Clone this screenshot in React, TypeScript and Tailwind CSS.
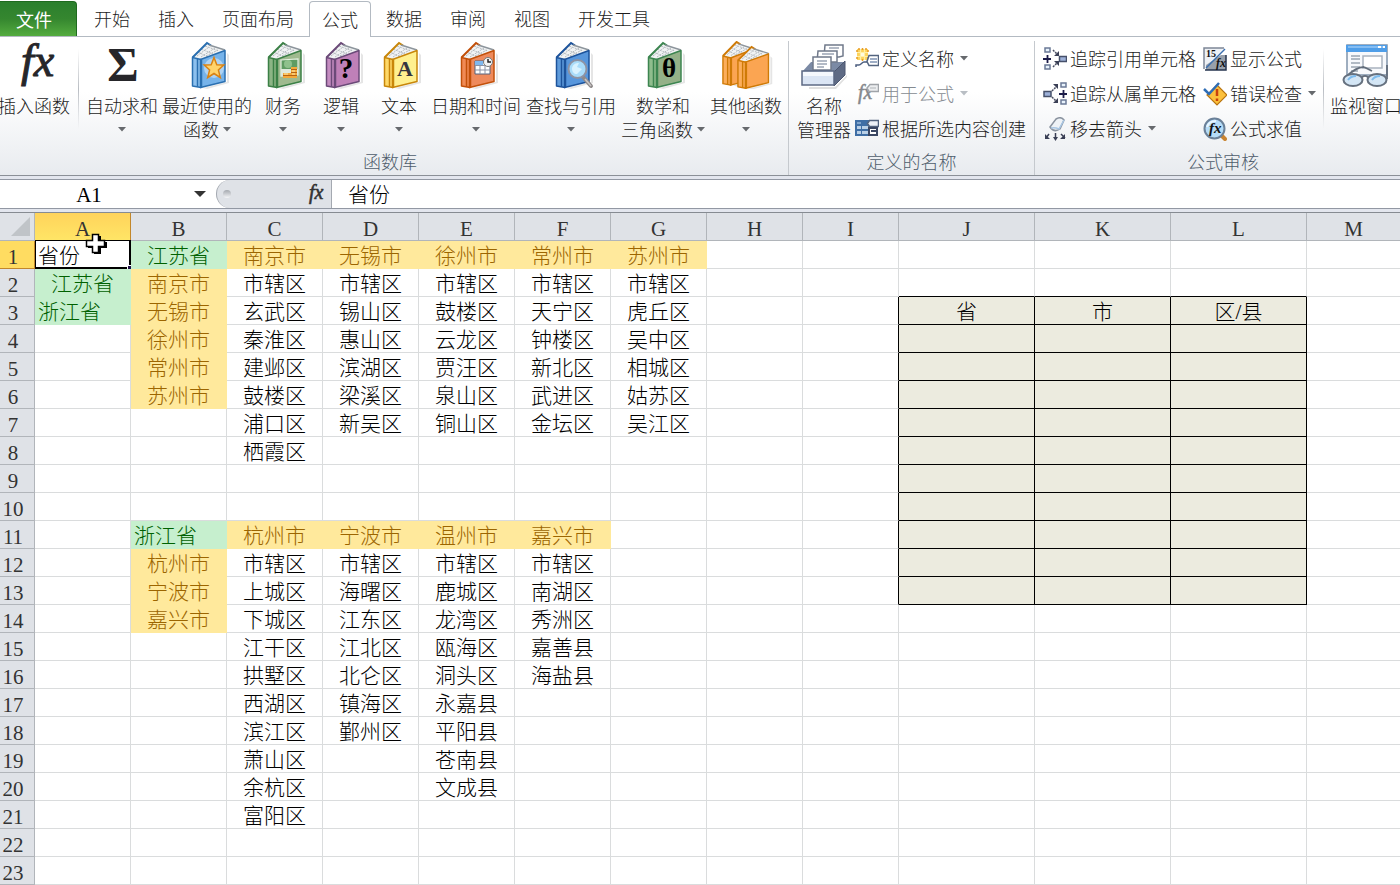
import React, { useState } from 'react';
import clsx from 'clsx';

const COLUMNS = ['A', 'B', 'C', 'D', 'E', 'F', 'G', 'H', 'I', 'J', 'K', 'L', 'M'];

const TABS = ['开始', '插入', '页面布局', '公式', '数据', '审阅', '视图', '开发工具'];

const ROWS: string[][] = [
  ['省份', '江苏省', '南京市', '无锡市', '徐州市', '常州市', '苏州市'],
  ['江苏省', '南京市', '市辖区', '市辖区', '市辖区', '市辖区', '市辖区'],
  ['浙江省', '无锡市', '玄武区', '锡山区', '鼓楼区', '天宁区', '虎丘区', '', '', '省', '市', '区/县'],
  ['', '徐州市', '秦淮区', '惠山区', '云龙区', '钟楼区', '吴中区'],
  ['', '常州市', '建邺区', '滨湖区', '贾汪区', '新北区', '相城区'],
  ['', '苏州市', '鼓楼区', '梁溪区', '泉山区', '武进区', '姑苏区'],
  ['', '', '浦口区', '新吴区', '铜山区', '金坛区', '吴江区'],
  ['', '', '栖霞区'],
  [],
  [],
  ['', '浙江省', '杭州市', '宁波市', '温州市', '嘉兴市'],
  ['', '杭州市', '市辖区', '市辖区', '市辖区', '市辖区'],
  ['', '宁波市', '上城区', '海曙区', '鹿城区', '南湖区'],
  ['', '嘉兴市', '下城区', '江东区', '龙湾区', '秀洲区'],
  ['', '', '江干区', '江北区', '瓯海区', '嘉善县'],
  ['', '', '拱墅区', '北仑区', '洞头区', '海盐县'],
  ['', '', '西湖区', '镇海区', '永嘉县'],
  ['', '', '滨江区', '鄞州区', '平阳县'],
  ['', '', '萧山区', '', '苍南县'],
  ['', '', '余杭区', '', '文成县'],
  ['', '', '富阳区'],
  [],
  [],
];

const LEFT_ALIGNED = ['A1', 'A3', 'B11'];

function cellClass(row: number, col: number) {
  const text = ROWS[row - 1][col] ?? '';
  const inForm = (r: number, c: number) => r >= 3 && r <= 13 && c >= 9 && c <= 11;

  if (text.endsWith('省') && col < 2) return 'bg-[#c6efce] border-[#c6efce] text-[#006100]';
  if (text.endsWith('市') && col < 9) return 'bg-[#ffe99c] border-[#ffe99c] text-[#9c6500]';
  if (inForm(row, col)) return 'bg-[#ecebdf] border-black text-black';
  return clsx(
    'bg-white text-black',
    inForm(row, col + 1) ? 'border-r-black' : 'border-r-[#dadcdd]',
    inForm(row + 1, col) ? 'border-b-black' : 'border-b-[#dadcdd]',
  );
}

/* ---------- icons ---------- */

function Caret({ muted = false }: { muted?: boolean }) {
  return (
    <svg width="8" height="5" viewBox="0 0 8 5" className={clsx('shrink-0', muted ? 'text-[#b9bec4]' : 'text-[#66696d]')}>
      <path d="M0 0h8L4 4.500z" fill="currentColor" />
    </svg>
  );
}

interface BookProps {
  edge: string;
  light: string;
  fill: string;
  children?: React.ReactNode;
}

function BookShape({ edge, light, fill }: BookProps) {
  return (
    <>
      <path d="M20 47 44 41V12l2 2v28L24 48z" fill="#000" opacity=".1" />
      <path d="M10 16 24 2 42 9 18 18z" fill="#f1f3f4" />
      <path d="M14 15l12-9M18 16l14-9M23 15l12-6M18 8l12 5M15 11l10 5M22 5l14 5" stroke="#b4babf" strokeWidth="1" strokeDasharray="2 1" />
      <path d="M9.500 16.500 24 2l4 2.500" fill="none" stroke={edge} strokeWidth="2" />
      <path d="M26 4 42 9" fill="none" stroke="#8d959c" strokeWidth="1.500" />
      <path d="M9.500 16.500 18 18.500V46.500L9.500 45z" fill={light} stroke={edge} strokeWidth="1.500" strokeLinejoin="round" />
      <path d="M17.500 18.500 42 9.500V40.500L17.500 46.500z" fill={fill} stroke={edge} strokeWidth="1.500" strokeLinejoin="round" />
      <path d="M14.500 18v28M18.500 18.500v28" stroke={edge} strokeWidth="1.500" />
    </>
  );
}

function Book(props: BookProps) {
  return (
    <svg width="48" height="48" viewBox="0 0 48 48">
      <BookShape {...props} />
      {props.children}
    </svg>
  );
}

const glyph = "font-['Liberation_Serif',serif] font-bold";
const thinGlyph = "overflow-visible font-['Liberation_Serif',serif] font-normal";

const RecentIcon = () => (
  <Book edge="#2a6fb0" light="#8dc0ee" fill="#76b3ea">
    <circle cx="31" cy="27" r="10" fill="#c8e1f7" opacity=".7" />
    <path d="M31 16.500l2.800 7.200 7 .3-5.400 5 1.900 7.500-6.300-4-6.300 4 1.900-7.500-5.400-5 7-.3z" fill="#ffd36b" stroke="#d98214" strokeWidth="1.500" />
  </Book>
);

const FinanceIcon = () => (
  <Book edge="#3b8046" light="#8cb585" fill="#9fba8f">
    <path d="M22 19 39 18V34L22 35z" fill="#5f9c63" stroke="#e3efe0" strokeWidth="1.200" />
    <path d="M22 28h17v6l-17 1z" fill="#dfe9dc" />
    <circle cx="29" cy="23" r="4" fill="#8fc18d" />
    <path d="M32 26h6v11h-6zM24 32h8v5h-8z" fill="#f2a93b" />
    <path d="M32 28.500h6M32 31.500h6M24 34.500h8M32 34.500h6" stroke="#b8620f" strokeWidth="1" />
    <path d="M33 30h3M33 33h3M25 33h4" stroke="#ffe9a8" strokeWidth="1" />
  </Book>
);

const LogicIcon = () => (
  <Book edge="#6b4a78" light="#c48cc0" fill="#bf80b8">
    <text x="29" y="37" textAnchor="middle" fontSize="29" className={glyph}>?</text>
  </Book>
);

const TextIcon = () => (
  <Book edge="#c8860a" light="#ffd968" fill="#fff08f">
    <text x="30" y="35" textAnchor="middle" fontSize="22" fill="#35353f" className={glyph}>A</text>
  </Book>
);

const DateIcon = () => (
  <Book edge="#c2500a" light="#f08a55" fill="#ee8a5c">
    <path d="M23 20h15v13H23z" fill="#fff" stroke="#55607a" strokeWidth="1" />
    <path d="M23 20h8v4h-8z" fill="#7fb8ef" />
    <path d="M23 24.500h15M23 29h15M28 24v9M33 24v9" stroke="#8b93a5" strokeWidth="1" />
    <circle cx="36" cy="21" r="4.500" fill="#f3f3f3" stroke="#777" strokeWidth="1" />
    <path d="M36 18v3h3" stroke="#222" strokeWidth="1.500" fill="none" />
  </Book>
);

const LookupIcon = () => (
  <Book edge="#1d539b" light="#5f9bdb" fill="#5796dc">
    <path d="M36 36l8 9" stroke="#8f8a8a" strokeWidth="4" strokeLinecap="round" />
    <path d="M38 38l6 7" stroke="#c9c6c6" strokeWidth="1.500" />
    <circle cx="30.500" cy="28" r="9" fill="#a9dcfa" stroke="#8e93a3" strokeWidth="2" />
    <path d="M25 27c1-4 4-5 7-5l-2 4 5 2-5 5c-3 0-5-2-5-6z" fill="#d9f2ff" />
  </Book>
);

const MathIcon = () => (
  <Book edge="#3c8550" light="#8fbd8d" fill="#94b188">
    <text x="30" y="36" textAnchor="middle" fontSize="27" className={glyph}>θ</text>
  </Book>
);

function MoreIcon() {
  const colors = { edge: '#cf7a06', light: '#fcae5c', fill: '#fba552' };
  return (
    <svg width="56" height="48" viewBox="0 0 56 48">
      <g transform="translate(-4 -1) scale(.94 .97)">
        <BookShape {...colors} />
      </g>
      <g transform="translate(11 4) scale(.94 .93)">
        <BookShape {...colors} />
      </g>
    </svg>
  );
}

const FxIcon = () => (
  <svg width="48" height="48" viewBox="0 0 48 48" fill="#26262a" stroke="#26262a" className={thinGlyph}>
    <text x="11" y="35" fontSize="46" fontStyle="italic">fx</text>
  </svg>
);

const SumIcon = () => (
  <svg width="48" height="48" viewBox="0 0 48 48" className="overflow-visible">
    <text x="25" y="40" textAnchor="middle" fontSize="48" fill="#26262a" className={glyph}>Σ</text>
  </svg>
);

const NameManagerIcon = () => (
  <svg width="48" height="48" viewBox="0 0 48 48">
    <path d="M9 46 35 46 47 34 47 36 36 48 9 48z" fill="#000" opacity=".12" />
    <path d="M2 31 11 21H45L34 31z" fill="#7b8aa5" />
    <path d="M25 4h18v11l-4 1H24z" fill="#fff" stroke="#70798a" strokeWidth="1.500" />
    <path d="M18 10h19v11H17z" fill="#fff" stroke="#70798a" strokeWidth="1.500" />
    <path d="M13 16h18v13H13z" fill="#fff" stroke="#70798a" strokeWidth="1.500" />
    <path d="M17 20h10M17 23h10M17 26h7M22 13h12M29 7h10" stroke="#9aa4b4" strokeWidth="1.500" />
    <path d="M34 31 45 20V34L34 45z" fill="#5e6a84" stroke="#4c5770" strokeWidth="1" />
    <path d="M2 30h32v14H2z" fill="#dbe5f4" stroke="#5e6a84" strokeWidth="1.500" />
    <path d="M3 31h30v4H3z" fill="#f5f8fd" />
  </svg>
);

const WatchIcon = () => (
  <svg width="48" height="48" viewBox="0 0 48 48">
    <path d="M5 4h40v30H5z" fill="#f7f9fc" stroke="#8094ab" strokeWidth="1.500" />
    <path d="M4 4h41v7H4z" fill="#4f9ee8" />
    <path d="M6 5h37v2H6z" fill="#84bdf3" />
    <path d="M36 6h3M41 6h2" stroke="#fff" strokeWidth="2" />
    <path d="M9 15h9M9 18h9M9 22h9M9 26h9M9 30h7" stroke="#9aa5b1" strokeWidth="1.500" />
    <path d="M21 15h19v12H21z" fill="#fff" stroke="#a9b3bf" strokeWidth="1.500" />
    <path d="M4 36C11 29 17 26 22 26M45 24v14M27 37c-3-3-5-3-8 0M22 26l8 4" fill="none" stroke="#626d7b" strokeWidth="1.800" />
    <ellipse cx="11" cy="39" rx="9.500" ry="6" fill="#d4e6f5" stroke="#66717f" strokeWidth="2" />
    <ellipse cx="35" cy="39" rx="9.500" ry="6" fill="#d4e6f5" stroke="#66717f" strokeWidth="2" />
    <path d="M6 39c2-3 5-4 8-4M30 39c2-3 5-4 8-4" fill="none" stroke="#7dbbed" strokeWidth="2" />
  </svg>
);

function SmallSvg({ children }: { children: React.ReactNode }) {
  return (
    <svg width="24" height="24" viewBox="0 0 24 24" fill="none" className="shrink-0">
      {children}
    </svg>
  );
}

const DefineNameIcon = () => (
  <SmallSvg>
    <path d="M2 2h11v11H2z" fill="#fdd35c" />
    <path d="M2 5.500h11M2 9.500h11M5.500 2v11M9.500 2v11" stroke="#fff0a8" strokeWidth="1.200" />
    <path d="M1 4h2M12 4h2M1 11h2M12 11h2M4 1v2M11 1v2M7.500 1v2M7.500 12v2" stroke="#e79c24" strokeWidth="1.500" />
    <path d="M6 6h3v3H6z" fill="#fffbe0" />
    <path d="M1 20v-2h3c2 0 3-3 5-3h4" stroke="#4d5f80" strokeWidth="1.500" />
    <path d="M14 8.500h9.500v10H14l-2-4z" fill="#fff" stroke="#53647f" strokeWidth="1.500" />
    <path d="M15 12h7M15 15h7" stroke="#7f93b2" strokeWidth="1.500" />
  </SmallSvg>
);

const UseFormulaIcon = () => (
  <SmallSvg>
    <text x="3" y="17" fontSize="20" fontStyle="italic" fill="#85888c" stroke="#85888c" strokeWidth=".5" className={thinGlyph}>fx</text>
    <path d="M15 2.500h8.500v7H14l-2-3.500z" fill="#eceef0" stroke="#a0a4a9" strokeWidth="1.500" />
    <path d="M15 6h6" stroke="#b0b4b8" />
  </SmallSvg>
);

const CreateFromIcon = () => (
  <SmallSvg>
    <path d="M0 3h14v16H0z" fill="#3f6ea5" />
    <path d="M2 9h4v3H2zM7 9h6v3H7zM2 14h4v3H2zM7 14h6v3H7z" fill="#b9cfe6" />
    <path d="M2 5h4v2H2z" fill="#7fa4cc" />
    <path d="M14.500 3.500h9v6h-9l-2-3z" fill="#eef2f8" stroke="#53647f" strokeWidth="1.500" />
    <path d="M14 11h8v7h-8z" fill="#fff" stroke="#3b4763" strokeWidth="2" />
    <path d="M16 14h5" stroke="#3b4763" strokeWidth="2" />
  </SmallSvg>
);

const Node = ({ x, y }: { x: number; y: number }) => (
  <path d={`M${x} ${y}h5v4h-5z`} fill="#e8f3fc" stroke="#6b7a96" strokeWidth="1.500" />
);

const PrecedentsIcon = () => (
  <SmallSvg>
    <Node x={2} y={1} />
    <Node x={2} y={18} />
    <path d="M0 12h8M4.500 8v8" stroke="#1b1b48" strokeWidth="1.800" />
    <path d="M10 3l5 5M10 20l5-5" stroke="#4a4f63" strokeWidth="1.500" strokeDasharray="2 1" />
    <path d="M16 4v5h-5zM16 19v-5h-5z" fill="#3a3f55" />
    <path d="M16.500 9.500h7v5h-7z" fill="#9db0d8" stroke="#46506a" strokeWidth="1.500" />
  </SmallSvg>
);

const DependentsIcon = () => (
  <SmallSvg>
    <path d="M1 9.500h7v5H1z" fill="#9db0d8" stroke="#46506a" strokeWidth="1.500" />
    <path d="M9 9l5-5M9 15l5 5" stroke="#4a4f63" strokeWidth="1.500" strokeDasharray="2 1" />
    <path d="M10 2h5v5zM15 16v5h-5z" fill="#3a3f55" />
    <Node x={18} y={1} />
    <Node x={18} y={18} />
    <path d="M16 12h8M20.500 8v8" stroke="#1b1b48" strokeWidth="1.800" />
  </SmallSvg>
);

const RemoveArrowsIcon = () => (
  <SmallSvg>
    <path d="M7 10 13 2q5-3 8 1l-4 9q-6 4-10-2z" fill="#eef2f6" stroke="#8a939f" strokeWidth="1.500" />
    <path d="M8 11q4-1 8 1l5-9" stroke="#a9c7e4" strokeWidth="1.500" />
    <path d="M6 17l-3 4M12.500 16v6M18 17l4 4" stroke="#3a3f55" strokeWidth="1.500" />
    <path d="M2 17v5h5zM10 20h5l-2.500 4zM17 22h5v-5z" fill="#3a3f55" />
  </SmallSvg>
);

const ShowFormulasIcon = () => (
  <SmallSvg>
    <path d="M1 1h20L1 22z" fill="#eef1f5" />
    <path d="M23 8v15H3V18L18 8z" fill="#98a0ab" />
    <path d="M1 22V1h20" stroke="#7d8796" strokeWidth="1.500" />
    <path d="M23 8v15H2" stroke="#26344f" strokeWidth="1.500" />
    <path d="M22 2 3 21" stroke="#3b6fae" strokeWidth="1.500" />
    <text x="3" y="10" fontSize="10" fill="#111" className={glyph}>15</text>
    <text x="13" y="20" fontSize="12" fontStyle="italic" fill="#111" className={glyph}>fx</text>
  </SmallSvg>
);

const ErrorCheckIcon = () => (
  <SmallSvg>
    <path d="M14 3 24 13 14 23 4 13z" fill="#fcc03c" stroke="#b87411" strokeWidth="1.200" />
    <path d="M14 7v7M14 16.500v2.500" stroke="#c8420c" strokeWidth="2.500" />
    <path d="M1 7l5 5L16 1" stroke="#2f6db5" strokeWidth="2.500" />
  </SmallSvg>
);

const EvaluateIcon = () => (
  <SmallSvg>
    <path d="M18 18l4 4" stroke="#c98432" strokeWidth="4" strokeLinecap="round" />
    <circle cx="11.500" cy="11.500" r="10" fill="#b5dcf8" stroke="#6b8199" strokeWidth="2" />
    <path d="M4 10q2-6 9-6" stroke="#e9f6ff" strokeWidth="2" />
    <text x="6" y="16" fontSize="15" fontStyle="italic" fill="#111" className={glyph}>fx</text>
  </SmallSvg>
);

/* ---------- ribbon ---------- */

interface BigButtonProps {
  icon: React.ReactNode;
  lines: string[];
  menu?: boolean;
  className: string;
}

function BigButton({ icon, lines, menu = false, className }: BigButtonProps) {
  const last = lines.length - 1;
  return (
    <button type="button" className={clsx('flex shrink-0 flex-col items-center whitespace-nowrap', className)}>
      <span className="mb-1 flex h-12 justify-center">{icon}</span>
      {lines.map((line, i) => (
        <span key={line} className="flex h-6 items-center gap-1 leading-6">
          {line}
          {menu && i === last && last > 0 && <Caret />}
        </span>
      ))}
      {menu && last === 0 && (
        <span className="flex h-6 items-center">
          <Caret />
        </span>
      )}
    </button>
  );
}

interface SmallButtonProps {
  icon: React.ReactNode;
  label: string;
  menu?: boolean;
  disabled?: boolean;
}

function SmallButton({ icon, label, menu = false, disabled = false }: SmallButtonProps) {
  return (
    <button
      type="button"
      disabled={disabled}
      className={clsx('flex h-[35px] items-center whitespace-nowrap', disabled && 'text-[#858b91]')}
    >
      {icon}
      <span className="ml-[3px]">{label}</span>
      {menu && (
        <span className="ml-1.5 flex items-center">
          <Caret muted={disabled} />
        </span>
      )}
    </button>
  );
}

function Group({ label, className, children }: { label: string; className: string; children: React.ReactNode }) {
  return (
    <section aria-label={label} className={clsx('flex flex-col', className)}>
      <div className="flex h-[108px] items-start">{children}</div>
      <div className="h-6 text-center leading-6 text-[#4f5d6c]">{label}</div>
    </section>
  );
}

const Divider = ({ className }: { className: string }) => (
  <div className={clsx('h-20 w-px shrink-0 bg-linear-to-b from-transparent via-[#b9bdc3] to-transparent', className)} />
);

function Ribbon() {
  return (
    <div className="flex h-[139px] overflow-hidden border-b border-[#8b9097] bg-linear-to-b from-white from-40% to-[#e8ebef] pt-1 text-[18px] text-[#1c1c1c]">
      <Group label="函数库" className="-ml-2 w-[797px] shrink-0 border-r border-[#c5c9ce]">
        <BigButton icon={<FxIcon />} lines={['插入函数']} className="ml-1 w-[76px]" />
        <Divider className="ml-1.5 mt-2 mr-[5px]" />
        <BigButton icon={<SumIcon />} lines={['自动求和']} menu className="w-[76px]" />
        <BigButton icon={<RecentIcon />} lines={['最近使用的', '函数']} menu className="w-[94px]" />
        <BigButton icon={<FinanceIcon />} lines={['财务']} menu className="w-[58px]" />
        <BigButton icon={<LogicIcon />} lines={['逻辑']} menu className="w-[58px]" />
        <BigButton icon={<TextIcon />} lines={['文本']} menu className="w-[58px]" />
        <BigButton icon={<DateIcon />} lines={['日期和时间']} menu className="w-24" />
        <BigButton icon={<LookupIcon />} lines={['查找与引用']} menu className="w-[94px]" />
        <BigButton icon={<MathIcon />} lines={['数学和', '三角函数']} menu className="w-[90px]" />
        <BigButton icon={<MoreIcon />} lines={['其他函数']} menu className="w-[76px]" />
      </Group>

      <Group label="定义的名称" className="w-[246px] shrink-0 border-r border-[#c5c9ce]">
        <BigButton icon={<NameManagerIcon />} lines={['名称', '管理器']} className="ml-1 w-[62px]" />
        <div className="flex flex-col items-start">
          <SmallButton icon={<DefineNameIcon />} label="定义名称" menu />
          <SmallButton icon={<UseFormulaIcon />} label="用于公式" menu disabled />
          <SmallButton icon={<CreateFromIcon />} label="根据所选内容创建" />
        </div>
      </Group>

      <Group label="公式审核" className="min-w-[376px] flex-1">
        <div className="ml-2 flex w-40 shrink-0 flex-col items-start">
          <SmallButton icon={<PrecedentsIcon />} label="追踪引用单元格" />
          <SmallButton icon={<DependentsIcon />} label="追踪从属单元格" />
          <SmallButton icon={<RemoveArrowsIcon />} label="移去箭头" menu />
        </div>
        <div className="flex w-[120px] shrink-0 flex-col items-start">
          <SmallButton icon={<ShowFormulasIcon />} label="显示公式" />
          <SmallButton icon={<ErrorCheckIcon />} label="错误检查" menu />
          <SmallButton icon={<EvaluateIcon />} label="公式求值" />
        </div>
        <Divider className="mt-2 mr-1" />
        <BigButton icon={<WatchIcon />} lines={['监视窗口']} className="w-[76px]" />
      </Group>
    </div>
  );
}

/* ---------- formula bar ---------- */

function FormulaBar() {
  const [name, setName] = useState('A1');
  const [value, setValue] = useState('省份');

  return (
    <div className="my-[3px] flex h-[30px] items-stretch border-y border-[#9298a3] bg-white font-['Liberation_Serif','Noto_Sans_CJK_SC',serif] text-[21px] font-light text-black">
      <input
        aria-label="名称框"
        className="w-[178px] shrink-0 pt-1 text-center focus:outline-none"
        value={name}
        onChange={(e) => setName(e.target.value)}
      />
      <button type="button" aria-label="名称列表" className="flex w-[38px] shrink-0 items-center justify-center pl-1.5">
        <svg width="12" height="6" viewBox="0 0 12 6">
          <path d="M0 0h12L6 6z" fill="#333" />
        </svg>
      </button>
      <div className="flex w-[116px] shrink-0 items-center justify-between rounded-l-full border border-y-0 border-[#a4a9b1] bg-[#dfe2e7] pl-1.5 pr-1.5">
        <span className="h-2 w-2 rounded-full bg-linear-to-b from-[#a5a9af] to-[#f5f6f8]" />
        <button type="button" aria-label="插入函数">
          <svg width="20" height="22" viewBox="0 0 20 22" fill="#333" stroke="#333" strokeWidth=".6" className={thinGlyph}>
            <text x="4" y="16" fontSize="20" fontStyle="italic">fx</text>
          </svg>
        </button>
      </div>
      <input
        aria-label="编辑栏"
        className="min-w-0 flex-1 px-4 pt-1 focus:outline-none"
        value={value}
        onChange={(e) => setValue(e.target.value)}
      />
    </div>
  );
}

/* ---------- sheet ---------- */

function Sheet() {
  return (
    <table className="w-full min-w-[1399px] table-fixed border-separate border-spacing-0 border-t border-[#868b92] font-['Liberation_Serif','Noto_Sans_CJK_SC',serif] text-[21px] leading-6 font-light">
      <colgroup>
        <col className="w-[35px]" />
        {COLUMNS.map((c) => (
          <col key={c} className={c === 'M' ? '' : 'JKL'.includes(c) ? 'w-[136px]' : 'w-24'} />
        ))}
      </colgroup>
      <thead>
        <tr>
          <th className="h-7 border-r border-b border-[#b1b5ba] bg-[#dfe2e7] p-0">
            <svg width="19" height="19" viewBox="0 0 19 19" className="ml-auto mr-1">
              <path d="M19 0v19H0z" fill="#c0c4c8" />
            </svg>
          </th>
          {COLUMNS.map((c) => (
            <th
              key={c}
              scope="col"
              className={clsx(
                'h-7 border-r border-b p-0 pt-1 text-center font-light leading-[22px] text-[#333] last:border-r-0',
                c === 'A'
                  ? 'border-[#c2872b] bg-linear-to-b from-[#ffd35b] to-[#ffe566]'
                  : 'border-[#b1b5ba] bg-[#dfe2e7]',
              )}
            >
              {c}
            </th>
          ))}
        </tr>
      </thead>
      <tbody>
        {ROWS.map((cells, i) => (
          <tr key={i}>
            <th
              scope="row"
              className={clsx(
                'h-7 border-r border-b p-0 pt-1 pr-2 text-center font-light leading-[22px] text-[#333]',
                i === 0 ? 'border-[#c2872b] bg-[#ffdc61]' : 'border-[#b1b5ba] bg-[#dfe2e7]',
              )}
            >
              {i + 1}
            </th>
            {COLUMNS.map((c, j) => {
              const ref = `${c}${i + 1}`;
              return (
                <td
                  key={ref}
                  className={clsx(
                    'relative h-7 whitespace-nowrap border-r border-b px-[3px] pt-[3px] pb-0 last:border-r-0',
                    LEFT_ALIGNED.includes(ref) ? 'text-left' : 'text-center',
                    cellClass(i + 1, j),
                  )}
                >
                  {cells[j]}
                  {ref === 'A1' && (
                    <>
                      <span className="absolute -top-px -right-px -bottom-px left-0 border-2 border-t border-l border-black" />
                      <span className="absolute -right-0.5 -bottom-0.5 h-[5px] w-[5px] border-t border-l border-white bg-[#1f1147]" />
                      <svg width="22" height="22" viewBox="0 0 22 22" className="absolute -top-2 left-[50px] z-10">
                        <path d="M9 3h7v6h6v6h-6v6H9v-6H3V9h6z" fill="#000" />
                        <path d="M7.500 1.500h6v6h6v6h-6v6h-6v-6h-6v-6h6z" fill="#fff" stroke="#000" strokeWidth="1.500" />
                      </svg>
                    </>
                  )}
                </td>
              );
            })}
          </tr>
        ))}
      </tbody>
    </table>
  );
}

export default function App() {
  const [tab, setTab] = useState('公式');

  return (
    <div className="min-h-screen overflow-x-hidden bg-[#e3e6ee] font-['Noto_Sans_CJK_SC',sans-serif] font-light">
      <nav className="flex h-[37px] items-stretch border-b border-[#b3bac2] bg-white pt-px text-[18px] text-[#1c1c1c]">
        <button
          type="button"
          className="mr-[3px] w-[77px] shrink-0 rounded-tr-sm border border-b-0 border-l-0 border-[#1f6a1f] bg-linear-to-b from-[#2b7f2d] via-[#35872f] to-[#54ac3f] pr-2 font-normal text-white"
        >
          文件
        </button>
        {TABS.map((t) => (
          <button
            key={t}
            type="button"
            onClick={() => setTab(t)}
            className={clsx(
              'shrink-0 whitespace-nowrap',
              t === tab ? 'mx-px -mb-px rounded-t border border-b-0 border-[#b3bac2] bg-white px-3' : 'px-3.5',
            )}
          >
            {t}
          </button>
        ))}
      </nav>
      <Ribbon />
      <FormulaBar />
      <Sheet />
    </div>
  );
}
